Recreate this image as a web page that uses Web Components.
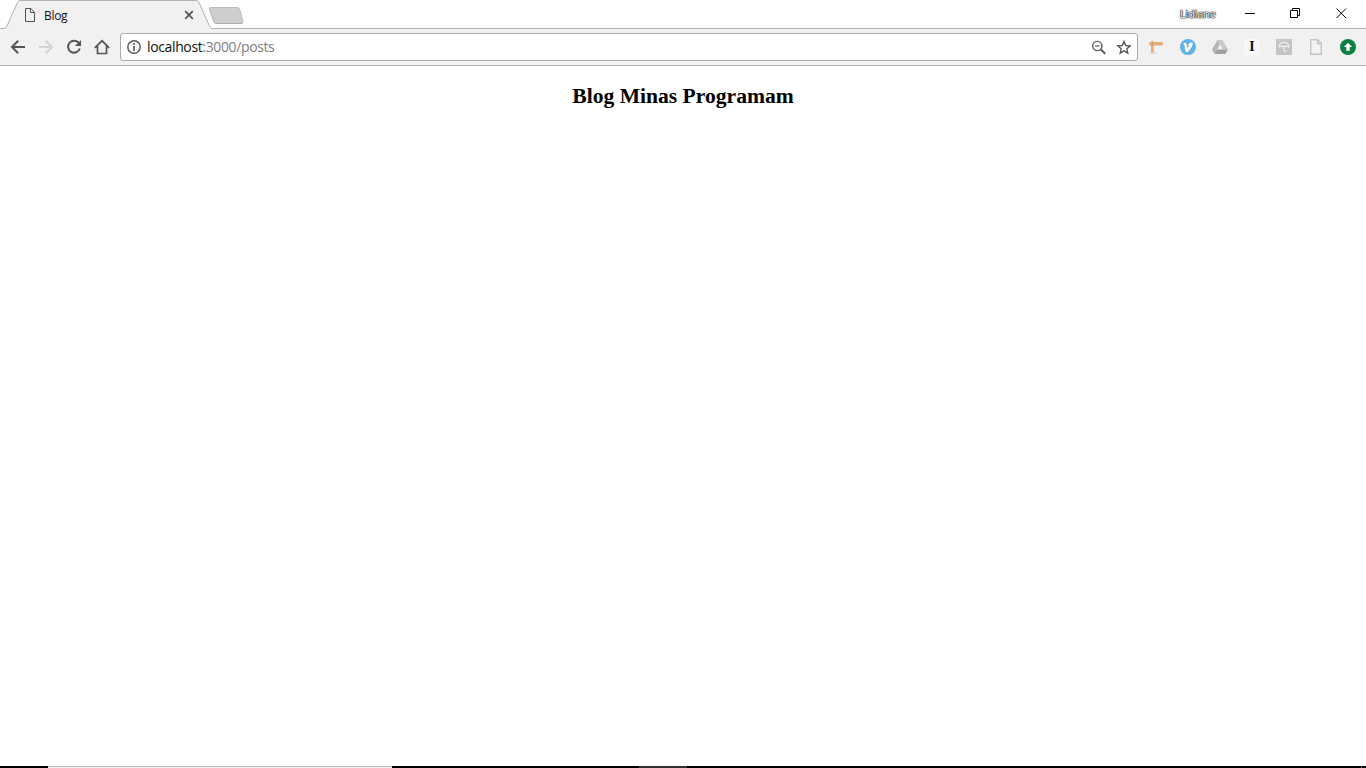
<!DOCTYPE html>
<html lang="pt-BR">
<head>
<meta charset="utf-8">
<title>Blog</title>
<style>
html, body { margin: 0; height: 100%; background: #fff; overflow: hidden; }
</style>
</head>
<body>
<browser-window></browser-window>
<script>
const define = (name, html) => {
  const template = document.createElement('template');
  template.innerHTML = html;
  customElements.define(name, class extends HTMLElement {
    constructor() {
      super();
      this.attachShadow({ mode: 'open' }).append(template.content.cloneNode(true));
    }
  });
};

define('browser-tab', `
<style>
:host { display: grid; width: 212px; height: 29px; font: 12px "Open Sans", sans-serif; color: #111; }
svg, .content { grid-area: 1 / 1; }
.content { display: flex; align-items: center; padding: 1px 18px 0 24px; }
.label { margin-left: 8px; flex: 1; letter-spacing: -.3px; }
svg { display: block; }
</style>
<svg width="212" height="29"><path d="M0 28.5H4Q6 28.5 7 26L17.5 2.5Q18.4.5 20 .5H196Q198 .5 199 2.5L209 26Q210 28.5 212 28.5V29H0Z" fill="#f1f1f1"/><path d="M0 0H18L5 28H0ZM199 0H212V28H210Z" fill="#fff"/><path d="M0 28.5H4Q6 28.5 7 26L17.5 2.5Q18.4.5 20 .5H196Q198 .5 199 2.5L209.5 26Q210.5 28.5 212 28.5" fill="none" stroke="#b2b2b2"/></svg>
<div class="content">
<svg width="12" height="14" fill="none" stroke="#555"><path d="M1.5.5H7L10.5 4.5V13.5H1.5ZM6.5.5V4.5H10.5"/></svg>
<span class="label"><slot></slot></span>
<svg width="10" height="10" stroke="#555" stroke-width="1.7"><path d="M1.2 1.2 8.8 8.8M8.8 1.2 1.2 8.8"/></svg>
</div>`);

define('window-controls', `
<style>
:host { display: flex; align-items: center; width: 186px; height: 28px; font: 11px "Open Sans", sans-serif; color: #fff; }
span { width: 65px; margin-top: -2px; letter-spacing: -.2px; text-shadow: 0 0 1px #000, 0 0 1px #000, 0 0 1px #333, 0 0 2px #666; }
svg { display: block; }
</style>
<span><slot></slot></span>
<svg width="121" height="28" fill="none" stroke="#000"><path d="M0 13.5H10M45.5 10.5H52.5V17.5H45.5ZM47.5 10V8.5H54.5V15.5H53M91.5 8.5 101 18M101 8.5 91.5 18"/></svg>`);

define('tab-strip', `
<style>
:host { display: flex; height: 29px; background: linear-gradient(#b2b2b2, #b2b2b2) 0 28px / 100% 1px no-repeat #fff; }
.new { display: block; flex: 1; height: 28px; overflow: visible; }
</style>
<browser-tab>Blog</browser-tab>
<svg class="new" height="28"><path d="M-1 7.5H25Q27 7.5 27.6 9L31 21.5Q31.3 23.5 29 23.5H4Q2.5 23.5 1.8 22L-2.7 9Q-3 7.5-1 7.5Z" fill="#cecece" stroke="#bbb"/><path d="M4 23.5H30" stroke="#aaa"/></svg>
<window-controls>Lidiane</window-controls>`);

define('address-bar', `
<style>
:host { box-sizing: border-box; width: 1018px; height: 28px; display: flex; align-items: center; padding: 0 6px; border: 1px solid #aaa; border-radius: 3px; background: #fff; font: 14px "Open Sans", sans-serif; color: #111; }
svg { display: block; flex: none; }
.url { flex: 1; margin-left: 6px; letter-spacing: -.37px; line-height: 20px; }
.url span { color: #808080; }
.star { margin-left: 10px; }
</style>
<svg width="14" height="14"><circle cx="7" cy="7" r="6.2" fill="none" stroke="#555" stroke-width="1.4"/><path d="M7 3V4.8M7 6V11" stroke="#555" stroke-width="1.7"/></svg>
<div class="url">localhost<span>:3000/posts</span></div>
<svg width="15" height="15" fill="none" stroke="#5a5a5a" stroke-width="1.4"><circle cx="6.3" cy="6" r="4.6"/><path d="M9.6 9.3 14.2 13.8" stroke-width="1.9"/><path d="M4.1 6H8.5" stroke-width="1.2"/></svg>
<svg class="star" width="15" height="15" viewBox="0 0 15 15"><path d="M8 1.5 9.7 5.5 14.2 5.9 10.8 8.8 11.8 13.2 8 10.9 4.2 13.2 5.2 8.8 1.8 5.9 6.3 5.5Z" fill="none" stroke="#5a5a5a" stroke-width="1.4"/></svg>`);

define('nav-buttons', `
<style>
:host { display: flex; gap: 12px; width: 110px; }
svg { display: block; flex: none; fill: none; stroke: #555; stroke-width: 2; }
.off { stroke: #d4d4d4; }
</style>
<svg width="16" height="16"><path d="M15 8H2M8.2 1.8 2 8 8.2 14.2"/></svg>
<svg class="off" width="16" height="16"><path d="M1 8H14M7.8 1.8 14 8 7.8 14.2"/></svg>
<svg width="16" height="16"><path d="M13 4.2A6 6 0 1 0 13.8 9.5"/><path d="M15 1V7H9Z" fill="#555" stroke="none"/></svg>
<svg width="16" height="16"><path d="M.8 8.8 8 1.8 15.2 8.8M3.5 7V14.5H12.5V7" stroke-width="1.7"/></svg>`);

define('extension-icons', `
<style>
:host { display: flex; gap: 16px; align-items: center; }
svg, .letter { display: block; flex: none; width: 16px; height: 16px; }
.letter { background: #f8f8f8; font: bold 14px/16px "Liberation Serif", serif; text-align: center; color: #111; }
</style>
<svg><ellipse cx="5" cy="14" rx="4" ry="1" fill="#ddd"/><path d="M3 2H5.7V13.6H3Z" fill="#e8ad70"/><path d="M1.3 3H14.6V6H1.3Z" fill="#edb67c"/><path d="M1.3 6H14.6" stroke="#d3975c" stroke-width=".7"/><path d="M8 3V5M10.5 3V5M13 3V5" stroke="#cb935e" stroke-width=".6"/><circle cx="4.4" cy="4.4" r="1" fill="#c98a4c"/></svg>
<svg><circle cx="8" cy="8" r="8" fill="#60b2e8"/><path d="M3.3 4.5Q5.7 3 6.5 4.7L7.4 9Q8.7 7.5 9 6.5L8 6Q9.3 2.7 12.7 3.7 13.2 7.3 7.8 13H5.7L4.3 6Z" fill="#fff"/></svg>
<svg><path d="M5.5 1H10.5L16 10.5H11Z" fill="#c8c8c8"/><path d="M5.5 1 0 10.5 2.6 15 8 5.5Z" fill="#b5b5b5"/><path d="M5.3 10.5H16L13.4 15H2.7Z" fill="#a0a0a0"/></svg>
<div class="letter">I</div>
<svg><path d="M0 0H16V16H0Z" fill="#c5c5c5"/><path d="M3 8Q3.5 3.3 8 3.3T13 8Q10.5 6.3 8 8 5.5 6.3 3 8M8 7.5V10.5Q8 12.8 10.5 12.3" fill="none" stroke="#f1f1f1" stroke-width="1.1"/></svg>
<svg fill="#f4f4f4" stroke="#c4c4c4" stroke-width="1.4"><path d="M2.7.8H9.7L13.3 4.5V15.2H2.7ZM9.5 1V4.7H13"/></svg>
<svg><circle cx="8" cy="8" r="8" fill="#0b8043"/><path d="M8 3.7 12.2 8H9.7V11.8H6.3V8H3.8Z" fill="#fff"/></svg>`);

define('browser-toolbar', `
<style>
:host { box-sizing: border-box; display: flex; align-items: center; height: 37px; padding: 0 10px; background: #f1f1f1; border-bottom: 1px solid #b2b2b2; }
extension-icons { margin-left: 10px; }
</style>
<nav-buttons></nav-buttons><address-bar></address-bar><extension-icons></extension-icons>`);

define('blog-page', `
<style>
:host { display: block; flex: 1; padding-top: 17px; text-align: center; }
h1 { margin: 0; font: bold 21.6px/26px "Liberation Serif", serif; color: #000; }
</style>
<h1><slot></slot></h1>`);

define('task-bar', `
<style>
:host { display: grid; grid-template-columns: 48px 344px 247px 48px 674px 1px 1fr; height: 2px; background: #000; }
.field { grid-column: 2; background: linear-gradient(#bbb 50%, #f0f0f0 50%); }
.app { grid-column: 4; background: #333; }
.edge { grid-column: 6; background: #666; }
</style>
<div class="field"></div><div class="app"></div><div class="edge"></div>`);

define('browser-window', `
<style>:host { display: flex; flex-direction: column; width: 1366px; height: 768px; }</style>
<tab-strip></tab-strip>
<browser-toolbar></browser-toolbar>
<blog-page>Blog Minas Programam</blog-page>
<task-bar></task-bar>`);
</script>
</body>
</html>
